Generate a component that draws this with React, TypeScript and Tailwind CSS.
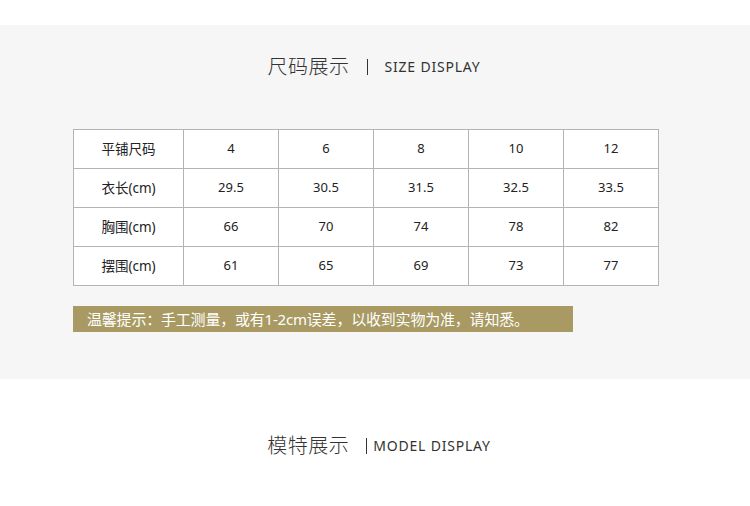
const HEAD = ["平铺尺码", "4", "6", "8", "10", "12"];

const ROWS = [
  ["衣长(cm)", "29.5", "30.5", "31.5", "32.5", "33.5"],
  ["胸围(cm)", "66", "70", "74", "78", "82"],
  ["摆围(cm)", "61", "65", "69", "73", "77"],
];

const font = { fontFamily: '"Noto Sans", "Noto Sans CJK SC", sans-serif' };

const SectionTitle = ({ cn, en, gap }: { cn: string; en: string; gap: string }) => (
  <div className="flex items-center justify-center h-[28px]">
    <span className="text-[20px] font-light text-[#333] tracking-[0.5px] leading-none">{cn}</span>
    <span className="ml-[17px] w-px h-[16px] bg-[#333]" />
    <span className={`${gap} text-[14px] text-[#333] tracking-[0.8px] leading-none`}>{en}</span>
  </div>
);

export default function App() {
  return (
    <div className="w-[750px] h-[506px] bg-white overflow-hidden" style={font}>
      <div className="h-[25px]" />

      <section className="h-[354px] bg-[#f6f6f6] pt-[28px]">
        <div className="pr-[2px]">
          <SectionTitle cn="尺码展示" en="SIZE DISPLAY" gap="ml-[17px]" />
        </div>

        <table className="mt-[48px] ml-[73px] border-collapse bg-white text-[13px] text-[#222]">
          <tbody>
            {[HEAD, ...ROWS].map((row, i) => (
              <tr key={i} className="h-[39px]">
                {row.map((cell, j) => (
                  <td
                    key={j}
                    className={`border border-[#b4b4b4] text-center p-0 ${
                      j === 0 ? "w-[110px] text-[13.5px]" : "w-[95px]"
                    }`}
                  >
                    {cell}
                  </td>
                ))}
              </tr>
            ))}
          </tbody>
        </table>

        <div className="mt-[20px] ml-[73px] w-[500px] h-[26px] bg-[#a89a62] flex items-center pl-[14px] text-[15px] tracking-[-0.2px] text-white">
          温馨提示：手工测量，或有1-2cm误差，以收到实物为准，请知悉。
        </div>
      </section>

      <section className="pt-[53px]">
        <div className="pl-[8px]">
          <SectionTitle cn="模特展示" en="MODEL DISPLAY" gap="ml-[6px]" />
        </div>
      </section>
    </div>
  );
}
